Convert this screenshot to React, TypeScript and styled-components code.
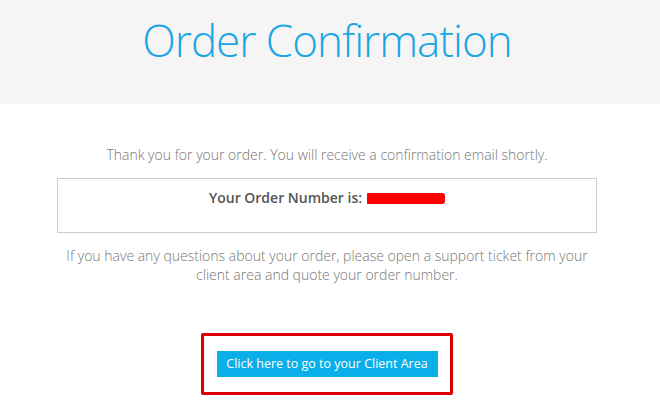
import styled, { createGlobalStyle } from "styled-components";

const GlobalStyle = createGlobalStyle`
  html, body {
    margin: 0;
    padding: 0;
    background: #ffffff;
    font-family: "Open Sans", "Liberation Sans", sans-serif;
  }
`;

export default function App() {
  return (
    <>
      <GlobalStyle />
      <Page>
        <Header>
          <Title>Order Confirmation</Title>
        </Header>
        <Content>
          <Lead>Thank you for your order. You will receive a confirmation email shortly.</Lead>
          <OrderBox>
            <OrderLabel>
              Your Order Number is: <Redacted />
            </OrderLabel>
          </OrderBox>
          <Note>
            If you have any questions about your order, please open a support ticket from your
            client area and quote your order number.
          </Note>
          <Highlight>
            <ClientButton href="#">Click here to go to your Client Area</ClientButton>
          </Highlight>
        </Content>
      </Page>
    </>
  );
}

const Page = styled.div`
  width: 660px;
  height: 415px;
  overflow: hidden;
`;

const Header = styled.header`
  height: 104px;
  background: #f5f5f5;
  display: flex;
  justify-content: center;
  padding-right: 6px;
  box-sizing: border-box;
`;

const Title = styled.h1`
  margin: 12px 0 0;
  font-size: 44px;
  font-weight: 300;
  letter-spacing: -1px;
  line-height: 56px;
  color: #1aa5e3;
`;

const Content = styled.main`
  width: 540px;
  margin: 0 0 0 57px;
  display: flex;
  flex-direction: column;
  align-items: center;
  padding-top: 42px;
`;

const Lead = styled.p`
  margin: 0;
  font-size: 14px;
  font-weight: 300;
  line-height: 18px;
  color: #777777;
  white-space: nowrap;
`;

const OrderBox = styled.div`
  align-self: stretch;
  margin-top: 14px;
  height: 55px;
  border: 1px solid #cccccc;
  box-sizing: border-box;
  display: flex;
  justify-content: center;
  align-items: flex-start;
  padding-top: 10px;
`;

const OrderLabel = styled.div`
  font-size: 14px;
  font-weight: 600;
  line-height: 18px;
  color: #555555;
  display: flex;
  align-items: center;
  gap: 5px;
`;

const Redacted = styled.span`
  display: inline-block;
  width: 78px;
  height: 11px;
  background: #ff0000;
  border-radius: 1px 3px 3px 1px;
`;

const Note = styled.p`
  margin: 13px 0 0;
  width: 530px;
  font-size: 14px;
  font-weight: 300;
  line-height: 19px;
  color: #777777;
  text-align: center;
`;

const Highlight = styled.div`
  margin-top: 49px;
  width: 252px;
  height: 62px;
  border: 3px solid #dd0000;
  border-radius: 2px;
  box-sizing: border-box;
  display: flex;
  justify-content: center;
  align-items: center;
`;

const ClientButton = styled.a`
  display: block;
  width: 221px;
  height: 26px;
  background: #0aaee8;
  color: #ffffff;
  font-size: 12.5px;
  font-weight: 400;
  line-height: 26px;
  text-align: center;
  text-decoration: none;
`;
